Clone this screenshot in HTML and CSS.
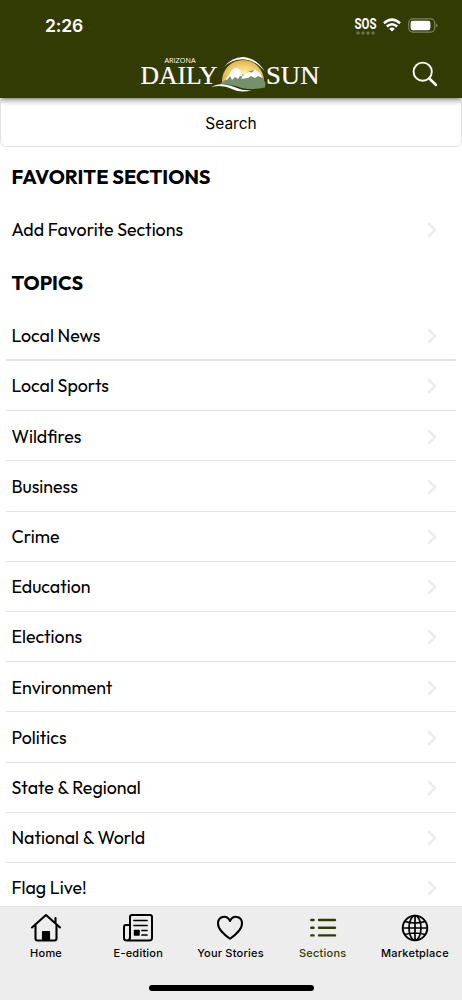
FILE: index.html
```html
<!DOCTYPE html>
<html lang="en">
<head>
<meta charset="utf-8">
<title>Arizona Daily Sun - Sections</title>
<link rel="stylesheet" href="styles.css">
</head>
<body>
<svg class="sprite" width="0" height="0"><symbol id="chevron" viewBox="0 0 12 18"><path d="M3 3L9 9L3 15" fill="none" stroke="#ececec" stroke-width="2.5" stroke-linecap="round" stroke-linejoin="round"/></symbol></svg>
<div class="app">
  <header class="header">
    <div class="status">
      <span class="time">2:26</span>
      <div class="indicators">
        <div class="sos"><svg width="24" height="19" viewBox="0 0 24 19"><text x="0.5" y="12.8" textLength="22" lengthAdjust="spacingAndGlyphs">SOS</text><g class="dots"><circle cx="4" cy="17" r="1.8"/><circle cx="9" cy="17" r="1.8"/><circle cx="14" cy="17" r="1.8"/><circle cx="19" cy="17" r="1.8"/></g></svg></div>
        <svg class="wifi" width="18" height="14" viewBox="0 0 18 14"><g fill="none" stroke="#fff" stroke-width="2.5"><path d="M1 5.2Q9-2 17 5.2"/><path d="M3.8 8.5Q9 4 14.2 8.5"/></g><path d="M6.1 10.7Q9 8.5 11.9 10.7L9 13.6Z" fill="#fff"/></svg>
        <svg class="battery" width="30" height="16" viewBox="0 0 30 16"><rect x=".7" y=".9" width="26" height="13.2" rx="4" fill="none" stroke="#7e8560" stroke-width="1.1"/><rect x="2.6" y="2.8" width="19.8" height="9.4" rx="2.2" fill="#fff"/><path d="M28 5.5q1.5 .5 1.5 2t-1.5 2z" fill="#7e8560"/></svg>
      </div>
    </div>
    <div class="brandbar">
      <svg class="logo" width="182" height="38" viewBox="139 55 182 38">
        <defs><radialGradient id="sun" cx="50%" cy="55%" r="60%"><stop offset="0" stop-color="#fff0a0"/><stop offset=".45" stop-color="#f5d274"/><stop offset="1" stop-color="#dda645"/></radialGradient></defs>
        <path d="M222 81A21 21 0 0 1 264 81L260 84H222Z" fill="url(#sun)"/>
        <path d="M219 85L230 76L236 70L243 75L250 71L256 70L262 77L265.500 83L265 87.500Q252 90 242 88Q229 83 219 85Z" fill="#75906b"/>
        <path d="M223 82L229 75L232 70L236 67.500L240 70L242 75L243.500 77L240 76L238 79L235 77L232 80L230 76L227 80L225 79ZM241 79L245 73L249 72L252 72.500L255 69.500L260 73L262.500 78L258 76L255 78L251 76L248 78Z" fill="#fff"/>
        <path d="M224 67Q232 57 243 57Q257 58 265 72Q256 60 243 59.200Q232 59 224 67Z" fill="#fff"/>
        <path d="M211 87Q217 83.500 224 84.500Q231 85 237 88Q243 91 252 90Q241 93.500 232 89Q223 84.500 211 87Z" fill="#fff"/>
        <text class="arizona" x="164.500" y="63" textLength="31" lengthAdjust="spacingAndGlyphs">ARIZONA</text>
        <text class="masthead" x="140.500" y="83.500" textLength="77" lengthAdjust="spacingAndGlyphs">DAILY</text>
        <text class="masthead" x="266" y="83.500" textLength="53.500" lengthAdjust="spacingAndGlyphs">SUN</text>
      </svg>
      <svg class="search-icon" width="26" height="27" viewBox="0 0 26 27" fill="none" stroke="#fff"><circle cx="10.700" cy="10.700" r="9.100" stroke-width="1.900"/><path d="M17.300 17.500L24 24" stroke-width="2.500" stroke-linecap="round"/></svg>
    </div>
  </header>
  <main class="content">
    <div class="search">Search</div>
    <h2 class="heading favorites">FAVORITE SECTIONS</h2>
    <div class="row single"><span>Add Favorite Sections</span><svg class="chevron"><use href="#chevron"/></svg></div>
    <h2 class="heading topics">TOPICS</h2>
    <div class="list">
      <div class="row"><span>Local News</span><svg class="chevron"><use href="#chevron"/></svg></div>
      <div class="row"><span>Local Sports</span><svg class="chevron"><use href="#chevron"/></svg></div>
      <div class="row"><span>Wildfires</span><svg class="chevron"><use href="#chevron"/></svg></div>
      <div class="row"><span>Business</span><svg class="chevron"><use href="#chevron"/></svg></div>
      <div class="row"><span>Crime</span><svg class="chevron"><use href="#chevron"/></svg></div>
      <div class="row"><span>Education</span><svg class="chevron"><use href="#chevron"/></svg></div>
      <div class="row"><span>Elections</span><svg class="chevron"><use href="#chevron"/></svg></div>
      <div class="row"><span>Environment</span><svg class="chevron"><use href="#chevron"/></svg></div>
      <div class="row"><span>Politics</span><svg class="chevron"><use href="#chevron"/></svg></div>
      <div class="row"><span>State &amp; Regional</span><svg class="chevron"><use href="#chevron"/></svg></div>
      <div class="row"><span>National &amp; World</span><svg class="chevron"><use href="#chevron"/></svg></div>
      <div class="row"><span>Flag Live!</span><svg class="chevron"><use href="#chevron"/></svg></div>
    </div>
  </main>
  <nav class="tabs">
    <div class="items">
      <div class="tab"><svg width="32" height="30" viewBox="0 0 32 30" fill="none" stroke="#000" stroke-width="2.1" stroke-linecap="round" stroke-linejoin="round"><path d="M2 14.500L16 2L30 14.500M5.500 12.500V25.500Q5.500 27.500 7.500 27.500H24.500Q26.500 27.500 26.500 25.500V12.500M25.500 10V5"/><path d="M13 27V19H19V27Z" fill="#000"/></svg><span>Home</span></div>
      <div class="tab"><svg width="32" height="30" viewBox="0 0 32 30" fill="none" stroke="#000" stroke-width="2" stroke-linecap="round" stroke-linejoin="round"><path d="M8 25V4Q8 2 10 2H28Q30 2 30 4V25Q30 27.500 27 27.500H5Q2 27.500 2 25V14Q2 12 4 12H8M8 24Q8 27.500 5 27.500"/><path d="M12 7.500H25M12 12.500H25M20 17.500H25M20 22H25" stroke-width="1.700"/><rect x="12.500" y="17.500" width="4.500" height="4.500" fill="#000" stroke-width="1.500"/></svg><span>E-edition</span></div>
      <div class="tab"><svg width="32" height="30" viewBox="0 0 32 30" fill="none" stroke="#000" stroke-width="2"><path d="M16 25.800C11 22 4 17 4 10.500C4 3 13 1.500 16 8C19 1.500 28 3 28 10.500C28 17 21 22 16 25.800Z" stroke-linejoin="round"/></svg><span>Your Stories</span></div>
      <div class="tab active"><svg width="32" height="30" viewBox="0 0 32 30" fill="none" stroke="#333b05" stroke-width="2.400" stroke-linecap="round"><path d="M4.300 7H6.500M12 7H28M4.300 14.700H6.500M12 14.700H28M4.300 22.400H6.500M12 22.400H28"/></svg><span>Sections</span></div>
      <div class="tab"><svg width="32" height="30" viewBox="0 0 32 30" fill="none" stroke="#000" stroke-width="1.700"><circle cx="16" cy="15" r="12.300" stroke-width="1.900"/><ellipse cx="16" cy="15" rx="6" ry="12.300"/><path d="M16 3V27M4 15H28M6 8.500Q16 11.500 26 8.500M6 21.500Q16 18.500 26 21.500"/></svg><span>Marketplace</span></div>
    </div>
    <div class="home-indicator"></div>
  </nav>
</div>
</body>
</html>
```
FILE: styles.css
```css
* { box-sizing: border-box; }
body { margin: 0; background: #fff; color: #000; font-family: Inter, sans-serif; }
.sprite { display: none; }
.app { width: 462px; height: 1000px; display: flex; flex-direction: column; overflow: hidden; }
.header { height: 98px; flex: none; background: #333b05; box-shadow: 0 1px 7px rgba(0,0,0,.6); z-index: 1; }
.status { height: 50px; display: flex; justify-content: space-between; padding: 16px 24px 0 45px; color: #fff; }
.time { font-size: 17.5px; line-height: 20px; font-weight: 600; letter-spacing: -.1px; }
.indicators { display: flex; align-items: flex-start; }
.sos { height: 19px; margin-right: 5px; }
.sos svg { overflow: visible; }
.sos text { font: 700 15.5px Roboto, sans-serif; fill: #fff; }
.dots { fill: #6c7346; }
.wifi { margin-top: 2px; margin-right: 7px; }
.battery { margin-top: 2px; }
.brandbar { height: 48px; display: flex; padding: 5px 24px 0 139px; justify-content: space-between; }
.arizona { font: 7.5px "Open Sans", sans-serif; fill: #fff; }
.masthead { font: 25.5px "Liberation Serif", serif; fill: #fff; stroke: #fff; stroke-width: .2px; }
.search-icon { margin-top: 6px; }
.content { flex: 1; min-height: 0; overflow: hidden; }
.search { height: 49px; border: 1px solid #e3e3e5; border-radius: 6px; text-align: center; font-size: 15.5px; line-height: 49px; }
.heading { margin: 0; padding-left: 11.5px; font: 700 20px/24px Outfit, Lato, sans-serif; height: 24px; }
.favorites { margin-top: 18px; }
.topics { margin-top: 16px; }
.row { height: 50.2px; padding: 1.5px 18px 0 5.5px; display: flex; align-items: center; justify-content: space-between; font: 17.8px/24px Outfit, Lato, sans-serif; border-bottom: 1.5px solid #e2e2ea; }
.row:first-child { border-bottom-width: 2px; }
.row.single { padding: 0 24px 0 11.5px; margin-top: 16px; border: 0; }
.list { margin: 15.7px 6px 0; }
.chevron { width: 12px; height: 18px; }
.tabs { height: 94px; flex: none; background: #ededed; border-top: 1.5px solid #dedee0; display: flex; flex-direction: column; align-items: center; }
.items { width: 461px; height: 78px; display: grid; grid-template-columns: repeat(5, 1fr); margin-right: 1px; }
.tab { display: flex; flex-direction: column; align-items: center; padding-top: 6px; font-size: 11px; line-height: 16px; font-weight: 500; letter-spacing: .22px; gap: 1.8px; white-space: nowrap; }
.active { color: #333b05; }
.home-indicator { width: 165px; height: 5.5px; background: #000; border-radius: 3px; }
```
